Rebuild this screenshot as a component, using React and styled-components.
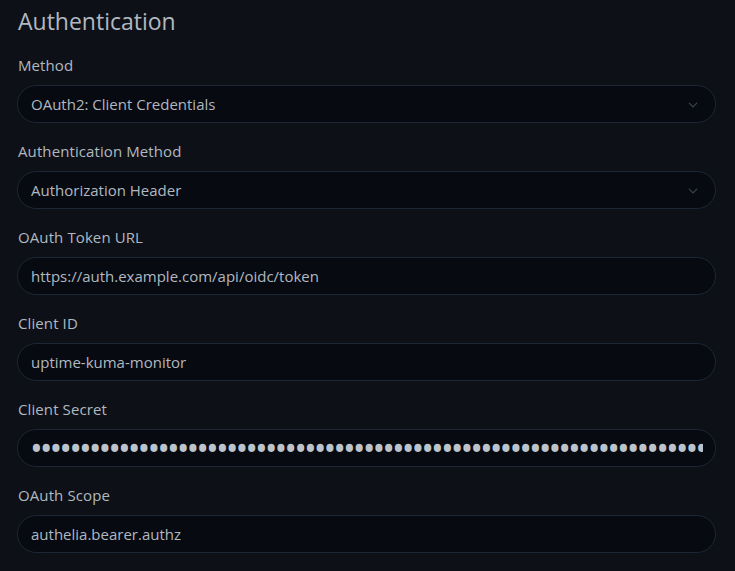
import React from "react";
import styled, { createGlobalStyle } from "styled-components";

const GlobalStyle = createGlobalStyle`
  html, body {
    margin: 0;
    padding: 0;
    background: #0d1117;
  }
  body {
    font-family: "Open Sans", "Noto Sans", sans-serif;
    color: #b1b8c0;
  }
`;

const fields = [
  { label: "Method", type: "select", value: "OAuth2: Client Credentials" },
  { label: "Authentication Method", type: "select", value: "Authorization Header" },
  { label: "OAuth Token URL", type: "text", value: "https://auth.example.com/api/oidc/token" },
  { label: "Client ID", type: "text", value: "uptime-kuma-monitor" },
  { label: "Client Secret", type: "password", value: "x".repeat(90) },
  { label: "OAuth Scope", type: "text", value: "authelia.bearer.authz" },
];

function App() {
  return (
    <>
      <GlobalStyle />
      <Page>
        <Heading>Authentication</Heading>
        {fields.map((f) => (
          <Field key={f.label}>
            <Label>{f.label}</Label>
            {f.type === "select" ? (
              <SelectWrap>
                <Select defaultValue={f.value}>
                  <option>{f.value}</option>
                </Select>
                <Chevron viewBox="0 0 16 16">
                  <path
                    d="M2 5l6 6 6-6"
                    fill="none"
                    stroke="currentColor"
                    strokeWidth="2"
                    strokeLinecap="round"
                    strokeLinejoin="round"
                  />
                </Chevron>
              </SelectWrap>
            ) : (
              <Input type={f.type} defaultValue={f.value} $secret={f.type === "password"} />
            )}
          </Field>
        ))}
      </Page>
    </>
  );
}

const Page = styled.div`
  padding: 7px 19px 0 17px;
  display: flex;
  flex-direction: column;
`;

const Heading = styled.h4`
  margin: 0 0 17px 1px;
  font-size: 23px;
  font-weight: 400;
  line-height: 29px;
  color: #b1b8c0;
`;

const Field = styled.div`
  display: flex;
  flex-direction: column;
  margin-bottom: 16px;
`;

const Label = styled.label`
  font-size: 15px;
  line-height: 24px;
  margin: 0 0 8px 1px;
  letter-spacing: 0.1px;
`;

const controlBase = `
  box-sizing: border-box;
  width: 100%;
  height: 38px;
  padding: 0 12px 0 13px;
  border: 1px solid #1d2634;
  border-radius: 19px;
  background: #070a10;
  color: #b1b8c0;
  font-family: "Open Sans", "Noto Sans", sans-serif;
  font-size: 15px;
  outline: none;
`;

const Input = styled.input`
  ${controlBase}
  font-size: ${(p) => (p.$secret ? "34px" : "15px")};
  letter-spacing: ${(p) => (p.$secret ? "-3px" : "0")};
  padding-left: ${(p) => (p.$secret ? "12px" : "13px")};
  color: ${(p) => (p.$secret ? "#bcc3ca" : "#b1b8c0")};
`;

const SelectWrap = styled.div`
  position: relative;
`;

const Select = styled.select`
  ${controlBase}
  appearance: none;
  padding-right: 40px;
`;

const Chevron = styled.svg`
  position: absolute;
  right: 18px;
  top: 15px;
  width: 10px;
  height: 10px;
  color: #3d4451;
  pointer-events: none;
`;

export default App;
